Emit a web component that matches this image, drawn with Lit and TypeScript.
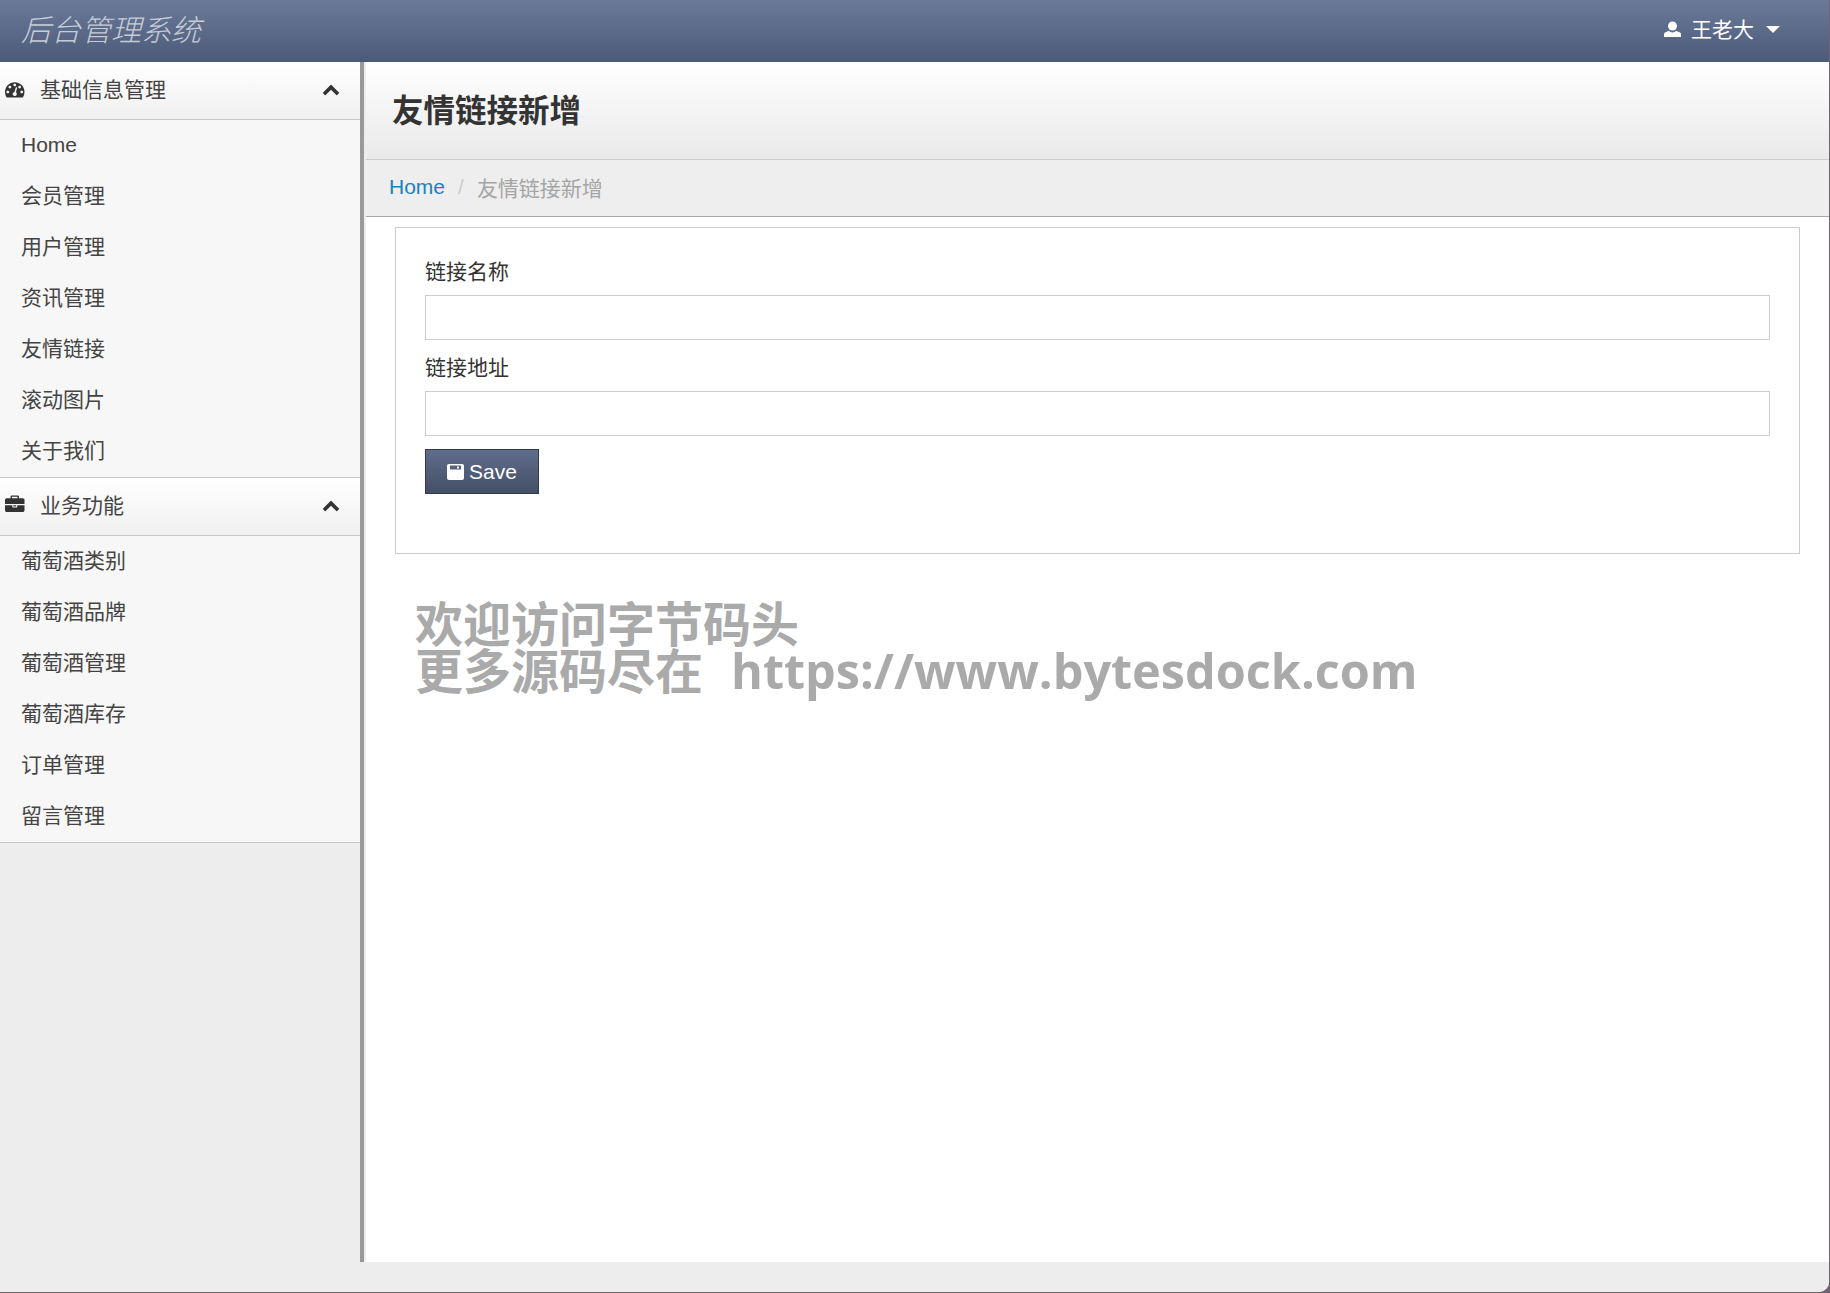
import { LitElement, html, css, svg } from "lit";
import { customElement } from "lit/decorators.js";

const chevron = svg`<path d="M1683 1331l-166 165q-19 19-45 19t-45-19l-531-531-531 531q-19 19-45 19t-45-19l-166-165q-19-19-19-45.5t19-45.5l742-741q19-19 45-19t45 19l742 741q19 19 19 45.5t-19 45.5z"/>`;
const gauge = svg`<path transform="translate(0 128)" d="M384 1152q0-53-37.5-90.5t-90.5-37.5-90.5 37.5-37.5 90.5 37.5 90.5 90.5 37.5 90.5-37.5 37.5-90.5zm192-448q0-53-37.5-90.5t-90.5-37.5-90.5 37.5-37.5 90.5 37.5 90.5 90.5 37.5 90.5-37.5 37.5-90.5zm428 481l101-382q6-26-7.5-48.5t-38.5-29.5-48 6.5-30 39.5l-101 382q-60 5-107 43.5t-63 98.5q-20 77 20 146t117 89 146-20 89-117q16-60-6-117t-72-91zm660-33q0-53-37.5-90.5t-90.5-37.5-90.5 37.5-37.5 90.5 37.5 90.5 90.5 37.5 90.5-37.5 37.5-90.5zm-640-640q0-53-37.5-90.5t-90.5-37.5-90.5 37.5-37.5 90.5 37.5 90.5 90.5 37.5 90.5-37.5 37.5-90.5zm448 192q0-53-37.5-90.5t-90.5-37.5-90.5 37.5-37.5 90.5 37.5 90.5 90.5 37.5 90.5-37.5 37.5-90.5zm320 448q0 261-141 483-19 29-54 29h-1402q-35 0-54-29-141-221-141-483 0-182 71-348t191-286 286-191 348-71 348 71 286 191 191 286 71 348z"/>`;
const briefcase = svg`<path transform="translate(0 128)" d="M640 256h512v-128h-512v128zm1152 640v480q0 66-47 113t-113 47h-1472q-66 0-113-47t-47-113v-480h672v160q0 26 19 45t45 19h320q26 0 45-19t19-45v-160h672zm-768 0v128h-256v-128h256zm768-480v384h-1792v-384q0-66 47-113t113-47h352v-160q0-40 28-68t68-28h576q40 0 68 28t28 68v160h352q66 0 113 47t47 113z"/>`;

const groups = [
  { icon: gauge, title: "基础信息管理", items: ["Home", "会员管理", "用户管理", "资讯管理", "友情链接", "滚动图片", "关于我们"] },
  { icon: briefcase, title: "业务功能", items: ["葡萄酒类别", "葡萄酒品牌", "葡萄酒管理", "葡萄酒库存", "订单管理", "留言管理"] },
];

@customElement("app-root")
export class AppRoot extends LitElement {
  static styles = css`
    :host {
      display: block;
      height: 1293px;
      background: #6f6470;
      font-family: "Liberation Sans", "Noto Sans CJK SC", sans-serif;
      font-size: 21px;
      color: #333;
    }
    .shell {
      width: 1829px;
      height: 1292px;
      display: flex;
      flex-direction: column;
      background: #ededed;
      border-bottom-right-radius: 10px;
      overflow: hidden;
    }
    .top {
      flex: 0 0 62px;
      box-sizing: border-box;
      display: flex;
      align-items: center;
      justify-content: space-between;
      padding: 0 49px 0 21px;
      background: linear-gradient(#6b7a99, #4c5a7a);
      color: #fff;
    }
    .logo {
      font-size: 30px;
      font-style: italic;
      font-weight: 300;
      color: #c6ccd6;
      line-height: 60px;
    }
    .who { display: flex; align-items: center; margin-bottom: 6px; }
    .who svg { width: 17px; height: 16px; fill: #fff; margin-right: 10px; margin-top: 1px; }
    .caret {
      width: 0; height: 0; margin-left: 12px; margin-top: 2px;
      border-left: 7px solid transparent;
      border-right: 7px solid transparent;
      border-top: 7px solid #fff;
    }
    .body { flex: 1; display: flex; min-height: 0; }
    .side {
      flex: 0 0 364px;
      box-sizing: border-box;
      border-right: 4px solid #999;
      background: #ededed;
    }
    .ghead {
      box-sizing: border-box;
      height: 58px;
      display: flex;
      align-items: center;
      background: linear-gradient(#fff, #f0f0f0);
      border-bottom: 1px solid #c8c8c8;
      padding: 0 20px 5px 5px;
    }
    .ghead .gi { width: 19.500px; height: 19.500px; fill: #333; margin-right: 15.500px; }
    .ghead span { flex: 1; color: #444; }
    .ghead .ch { width: 18px; height: 18px; fill: #333; margin-top: 2px; }
    .items { background: #f7f7f7; border-bottom: 1px solid #c8c8c8; padding: 0; }
    .item { height: 51px; line-height: 49px; padding-left: 21px; color: #444; }
    .content { flex: 1; background: #fff; margin-left: 2px; position: relative; min-width: 0; }
    .title {
      box-sizing: border-box;
      height: 98px;
      display: flex;
      align-items: center;
      padding: 0 0 6px 26px;
      background: linear-gradient(#fff, #e9e9e9);
      border-bottom: 1px solid #ccc;
      font-size: 31.500px;
      font-weight: 700;
      color: #333;
    }
    .crumb {
      box-sizing: border-box;
      height: 57px;
      display: flex;
      align-items: center;
      padding: 0 0 2px 23px;
      background: #eee;
      border-bottom: 1px solid #aaa;
      color: #a5a5a5;
    }
    .crumb a { color: #1a82c3; }
    .crumb i { font-style: normal; color: #ccc; margin: 0 13px; }
    .card {
      box-sizing: border-box;
      margin: 10px 29px 0 29px;
      height: 327px;
      border: 1px solid #ccc;
      padding: 29px 29px 0;
    }
    .label { line-height: 30px; height: 30px; margin-bottom: 8px; color: #333; }
    .input {
      box-sizing: border-box;
      display: block;
      width: 100%;
      height: 45px;
      border: 1px solid #ccc;
      background: #fff;
      margin-bottom: 13px;
      padding: 0;
    }
    .btn {
      box-sizing: border-box;
      width: 114px;
      height: 45px;
      display: flex;
      align-items: center;
      justify-content: center;
      gap: 5px;
      border: 1px solid #33394a;
      background: linear-gradient(#5f6d8c, #454f66);
      color: #fff;
      font: inherit;
      padding: 0;
      margin-top: 1px;
    }
    .btn svg { width: 17px; height: 16px; }
    .mark {
      position: absolute;
      left: 49px;
      top: 538px;
      font-family: "Open Sans", "Noto Sans CJK SC", sans-serif;
      font-size: 48px;
      font-weight: 700;
      line-height: 47px;
      color: #aaa;
      white-space: pre;
    }
    .url { font-size: 48.600px; margin-left: 3px; }
    .foot { flex: 0 0 30px; background: #ededed; }
  `;

  render() {
    return html`
      <div class="shell">
        <div class="top">
          <div class="logo">后台管理系统</div>
          <div class="who">
            <svg viewBox="0 0 17 16">
              <circle cx="8.500" cy="5" r="4.500"/>
              <path d="M0 16v-2.500c0-1 .5-1.800 1.500-2.200l3.500-1.500c1 1.200 2 1.700 3.500 1.700s2.500-.5 3.500-1.700l3.500 1.500c1 .4 1.500 1.200 1.500 2.200V16z"/>
            </svg>
            <span>王老大</span>
            <div class="caret"></div>
          </div>
        </div>
        <div class="body">
          <div class="side">
            ${groups.map(
              (g) => html`
                <div class="group">
                  <div class="ghead">
                    <svg class="gi" viewBox="0 0 1792 1792">${g.icon}</svg>
                    <span>${g.title}</span>
                    <svg class="ch" viewBox="0 0 1792 1792">${chevron}</svg>
                  </div>
                  <div class="items">${g.items.map((t) => html`<div class="item">${t}</div>`)}</div>
                </div>
              `
            )}
          </div>
          <div class="content">
            <div class="title">友情链接新增</div>
            <div class="crumb"><a>Home</a><i>/</i><span>友情链接新增</span></div>
            <div class="card">
              <div class="label">链接名称</div>
              <div class="input"></div>
              <div class="label">链接地址</div>
              <div class="input"></div>
              <button class="btn">
                <svg viewBox="0 0 17 16">
                  <path fill="#fff" fill-rule="evenodd" d="M2 0h13a2 2 0 0 1 2 2v12a2 2 0 0 1-2 2H2a2 2 0 0 1-2-2V2a2 2 0 0 1 2-2zM3 1.500v4h11v-4z"/>
                  <rect x="10" y="2.500" width="2" height="2" fill="#fff"/>
                </svg>
                Save
              </button>
            </div>
            <div class="mark">欢迎访问字节码头
更多源码尽在  <span class="url">https://www.bytesdock.com</span></div>
          </div>
        </div>
        <div class="foot"></div>
      </div>
    `;
  }
}
